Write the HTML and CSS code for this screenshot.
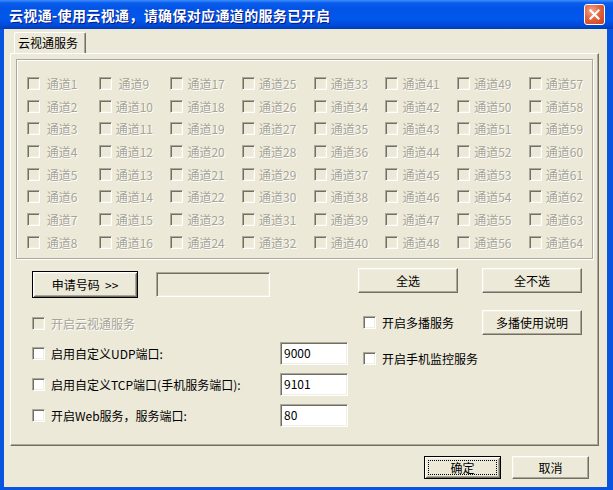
FILE: index.html
```html
<!DOCTYPE html>
<html lang="zh-CN">

<head>
    <meta charset="utf-8">
    <title>云视通</title>
    <link rel="stylesheet" href="styles.css">
</head>

<body>
    <div class="window">
        <div class="titlebar">
            <span class="title">云视通-使用云视通，请确保对应通道的服务已开启</span>
            <button class="close">
                <svg width="19" height="19" viewBox="0 0 19 19">
                    <path d="M5.5 5.5 L13.5 13.5 M13.5 5.5 L5.5 13.5" stroke="#fff" stroke-width="2.2" stroke-linecap="square" />
                </svg>
            </button>
        </div>

        <div class="frame">
            <div class="tabs">
                <div class="tab">云视通服务</div>
            </div>

            <div class="panel">
                <div class="channels">
                    <label class="channel"><span class="cb"></span><span> 通道1</span></label>
                    <label class="channel"><span class="cb"></span><span> 通道2</span></label>
                    <label class="channel"><span class="cb"></span><span> 通道3</span></label>
                    <label class="channel"><span class="cb"></span><span> 通道4</span></label>
                    <label class="channel"><span class="cb"></span><span> 通道5</span></label>
                    <label class="channel"><span class="cb"></span><span> 通道6</span></label>
                    <label class="channel"><span class="cb"></span><span> 通道7</span></label>
                    <label class="channel"><span class="cb"></span><span> 通道8</span></label>
                    <label class="channel"><span class="cb"></span><span> 通道9</span></label>
                    <label class="channel"><span class="cb"></span><span>通道10</span></label>
                    <label class="channel"><span class="cb"></span><span>通道11</span></label>
                    <label class="channel"><span class="cb"></span><span>通道12</span></label>
                    <label class="channel"><span class="cb"></span><span>通道13</span></label>
                    <label class="channel"><span class="cb"></span><span>通道14</span></label>
                    <label class="channel"><span class="cb"></span><span>通道15</span></label>
                    <label class="channel"><span class="cb"></span><span>通道16</span></label>
                    <label class="channel"><span class="cb"></span><span>通道17</span></label>
                    <label class="channel"><span class="cb"></span><span>通道18</span></label>
                    <label class="channel"><span class="cb"></span><span>通道19</span></label>
                    <label class="channel"><span class="cb"></span><span>通道20</span></label>
                    <label class="channel"><span class="cb"></span><span>通道21</span></label>
                    <label class="channel"><span class="cb"></span><span>通道22</span></label>
                    <label class="channel"><span class="cb"></span><span>通道23</span></label>
                    <label class="channel"><span class="cb"></span><span>通道24</span></label>
                    <label class="channel"><span class="cb"></span><span>通道25</span></label>
                    <label class="channel"><span class="cb"></span><span>通道26</span></label>
                    <label class="channel"><span class="cb"></span><span>通道27</span></label>
                    <label class="channel"><span class="cb"></span><span>通道28</span></label>
                    <label class="channel"><span class="cb"></span><span>通道29</span></label>
                    <label class="channel"><span class="cb"></span><span>通道30</span></label>
                    <label class="channel"><span class="cb"></span><span>通道31</span></label>
                    <label class="channel"><span class="cb"></span><span>通道32</span></label>
                    <label class="channel"><span class="cb"></span><span>通道33</span></label>
                    <label class="channel"><span class="cb"></span><span>通道34</span></label>
                    <label class="channel"><span class="cb"></span><span>通道35</span></label>
                    <label class="channel"><span class="cb"></span><span>通道36</span></label>
                    <label class="channel"><span class="cb"></span><span>通道37</span></label>
                    <label class="channel"><span class="cb"></span><span>通道38</span></label>
                    <label class="channel"><span class="cb"></span><span>通道39</span></label>
                    <label class="channel"><span class="cb"></span><span>通道40</span></label>
                    <label class="channel"><span class="cb"></span><span>通道41</span></label>
                    <label class="channel"><span class="cb"></span><span>通道42</span></label>
                    <label class="channel"><span class="cb"></span><span>通道43</span></label>
                    <label class="channel"><span class="cb"></span><span>通道44</span></label>
                    <label class="channel"><span class="cb"></span><span>通道45</span></label>
                    <label class="channel"><span class="cb"></span><span>通道46</span></label>
                    <label class="channel"><span class="cb"></span><span>通道47</span></label>
                    <label class="channel"><span class="cb"></span><span>通道48</span></label>
                    <label class="channel"><span class="cb"></span><span>通道49</span></label>
                    <label class="channel"><span class="cb"></span><span>通道50</span></label>
                    <label class="channel"><span class="cb"></span><span>通道51</span></label>
                    <label class="channel"><span class="cb"></span><span>通道52</span></label>
                    <label class="channel"><span class="cb"></span><span>通道53</span></label>
                    <label class="channel"><span class="cb"></span><span>通道54</span></label>
                    <label class="channel"><span class="cb"></span><span>通道55</span></label>
                    <label class="channel"><span class="cb"></span><span>通道56</span></label>
                    <label class="channel"><span class="cb"></span><span>通道57</span></label>
                    <label class="channel"><span class="cb"></span><span>通道58</span></label>
                    <label class="channel"><span class="cb"></span><span>通道59</span></label>
                    <label class="channel"><span class="cb"></span><span>通道60</span></label>
                    <label class="channel"><span class="cb"></span><span>通道61</span></label>
                    <label class="channel"><span class="cb"></span><span>通道62</span></label>
                    <label class="channel"><span class="cb"></span><span>通道63</span></label>
                    <label class="channel"><span class="cb"></span><span>通道64</span></label>
                </div>

                <div class="options">
                    <div class="col-left">
                        <div class="apply-row">
                            <button class="btn default apply">申请号码&nbsp;&nbsp;&gt;&gt;</button>
                            <span class="field disabled number"></span>
                        </div>

                        <label class="check disabled cloud"><span class="cb"></span>开启云视通服务</label>

                        <div class="port-row first">
                            <label class="check port-label"><span class="cb on"></span>启用自定义UDP端口:</label>
                            <span class="field port">9000</span>
                        </div>
                        <div class="port-row">
                            <label class="check port-label"><span class="cb on"></span>启用自定义TCP端口(手机服务端口):</label>
                            <span class="field port">9101</span>
                        </div>
                        <div class="port-row">
                            <label class="check port-label"><span class="cb on"></span>开启Web服务，服务端口:</label>
                            <span class="field port">80</span>
                        </div>
                    </div>

                    <div class="col-right">
                        <div class="select-row">
                            <button class="btn wide">全选</button>
                            <button class="btn wide">全不选</button>
                        </div>
                        <div class="multi-row">
                            <label class="check"><span class="cb on"></span>开启多播服务</label>
                            <button class="btn wide">多播使用说明</button>
                        </div>
                        <label class="check phone"><span class="cb on"></span>开启手机监控服务</label>
                    </div>
                </div>
            </div>

            <div class="footer">
                <button class="btn default footer-btn"><span class="focus">确定</span></button>
                <button class="btn footer-btn">取消</button>
            </div>
        </div>
    </div>
</body>

</html>
```

FILE: styles.css
```css
* {
    box-sizing: border-box;
}

body {
    margin: 0;
    font-family: "Noto Sans CJK SC", sans-serif;
    font-size: 12px;
    color: #000;
    background: #ECE9D8;
}

.window {
    width: 613px;
    height: 490px;
    display: flex;
    flex-direction: column;
}

/* title bar */

.titlebar {
    height: 29px;
    flex: none;
    display: flex;
    align-items: center;
    justify-content: space-between;
    padding: 0 8px 0 9px;
    background: linear-gradient(#3D8FFF 0, #0A5CEB 3px, #0254E6 8px, #0157EC 19px, #004BD9 25px, #003CB8 29px);
}

.title {
    color: #fff;
    font-weight: bold;
    font-size: 14px;
    letter-spacing: 0.35px;
    text-shadow: 1px 1px #0A1883;
}

.close {
    width: 21px;
    height: 21px;
    padding: 0;
    border: 1px solid #fff;
    border-radius: 3px;
    background: radial-gradient(circle at 35% 30%, #F3A58A 0, #E4633F 45%, #C7401C 100%);
    display: flex;
    align-items: center;
    justify-content: center;
}

/* window body */

.frame {
    flex: 1;
    border-left: 4px solid #0A55E0;
    border-right: 6px solid #0A55E0;
    border-bottom: 3px solid #0A55E0;
    padding-top: 3px;
    background: #ECE9D8;
}

.tabs {
    padding-left: 10px;
    display: flex;
}

.tab {
    width: 72px;
    height: 21px;
    padding: 0 0 0 3px;
    line-height: 20px;
    border-top: 1px solid #fff;
    border-left: 1px solid #fff;
    border-right: 1px solid #716F64;
    border-radius: 2px 2px 0 0;
    box-shadow: inset -1px 0 #ACA899;
}

.panel {
    margin-left: 6px;
    width: 589px;
    height: 393px;
    border: 1px solid;
    border-color: #fff #716F64 #716F64 #fff;
    box-shadow: inset -1px -1px #ACA899;
    padding: 5px 0 0 5px;
}

/* channel list */

.channels {
    width: 577px;
    height: 200px;
    border: 1px solid #ACA899;
    box-shadow: inset 1px 1px #fff, 1px 1px #fff;
    padding: 12px 0 0 10px;
    display: grid;
    grid-template-columns: repeat(8, 71.7px);
    grid-template-rows: repeat(8, 22.7px);
    grid-auto-flow: column;
}

.channel {
    display: flex;
    align-items: center;
    color: #A7A496;
    text-shadow: 1px 1px #fff;
    white-space: pre;
}

.channel .cb {
    margin-right: 4px;
    background: #ECE9D8;
}

.cb {
    flex: none;
    width: 13px;
    height: 13px;
    border: 1px solid;
    border-color: #ACA899 #fff #fff #ACA899;
    box-shadow: inset 1px 1px #716F64, inset -1px -1px #F1EFE2;
    background: #ECE9D8;
}

.cb.on {
    background: #fff;
}

.check {
    display: flex;
    align-items: center;
    height: 16px;
}

.check .cb {
    margin-right: 6px;
}

.check.disabled {
    color: #A7A496;
    text-shadow: 1px 1px #fff;
}

/* buttons and fields */

.btn {
    font-family: inherit;
    font-size: 12px;
    color: #000;
    padding: 0;
    background: #ECE9D8;
    border: 1px solid;
    border-color: #fff #716F64 #716F64 #fff;
    box-shadow: inset -1px -1px #ACA899, inset 1px 1px #F1EFE2;
}

.btn.default {
    border-color: #000;
    box-shadow: inset 1px 1px #fff, inset -1px -1px #716F64, inset 2px 2px #F1EFE2, inset -2px -2px #ACA899;
}

.field {
    display: block;
    height: 23px;
    border: 1px solid;
    border-color: #ACA899 #fff #fff #ACA899;
    box-shadow: inset 1px 1px #716F64, inset -1px -1px #F1EFE2;
    background: #fff;
    padding: 2px 0 0 3px;
    line-height: 16px;
}

.field.disabled {
    background: #ECE9D8;
}

/* lower options */

.options {
    display: flex;
    margin-top: 9px;
    padding-left: 16px;
}

.col-left {
    width: 316px;
}

.col-right {
    margin-left: 10px;
    width: 224px;
}

.apply-row {
    display: flex;
    margin-top: 3px;
}

.apply {
    width: 106px;
    height: 27px;
}

.number {
    width: 114px;
    height: 25px;
    margin: 1px 0 0 18px;
}

.cloud {
    margin-top: 17px;
}

.port-row {
    display: flex;
    align-items: center;
    margin-top: 8px;
}

.port-row.first {
    margin-top: 11px;
}

.port-label {
    width: 248px;
}

.port {
    width: 68px;
}

.select-row {
    display: flex;
    gap: 24px;
}

.wide {
    width: 100px;
    height: 25px;
}

.multi-row {
    display: flex;
    align-items: center;
    justify-content: space-between;
    margin-top: 17px;
    padding-left: 5px;
}

.phone {
    margin-top: 15px;
    padding-left: 5px;
}

/* dialog buttons */

.footer {
    display: flex;
    justify-content: flex-end;
    gap: 11px;
    margin-top: 10px;
    padding-right: 18px;
}

.footer-btn {
    width: 77px;
    height: 23px;
}

.footer-btn.default {
    display: flex;
    padding: 3px;
}

.focus {
    flex: 1;
    display: flex;
    align-items: center;
    justify-content: center;
    border: 1px dotted #000;
}
```
